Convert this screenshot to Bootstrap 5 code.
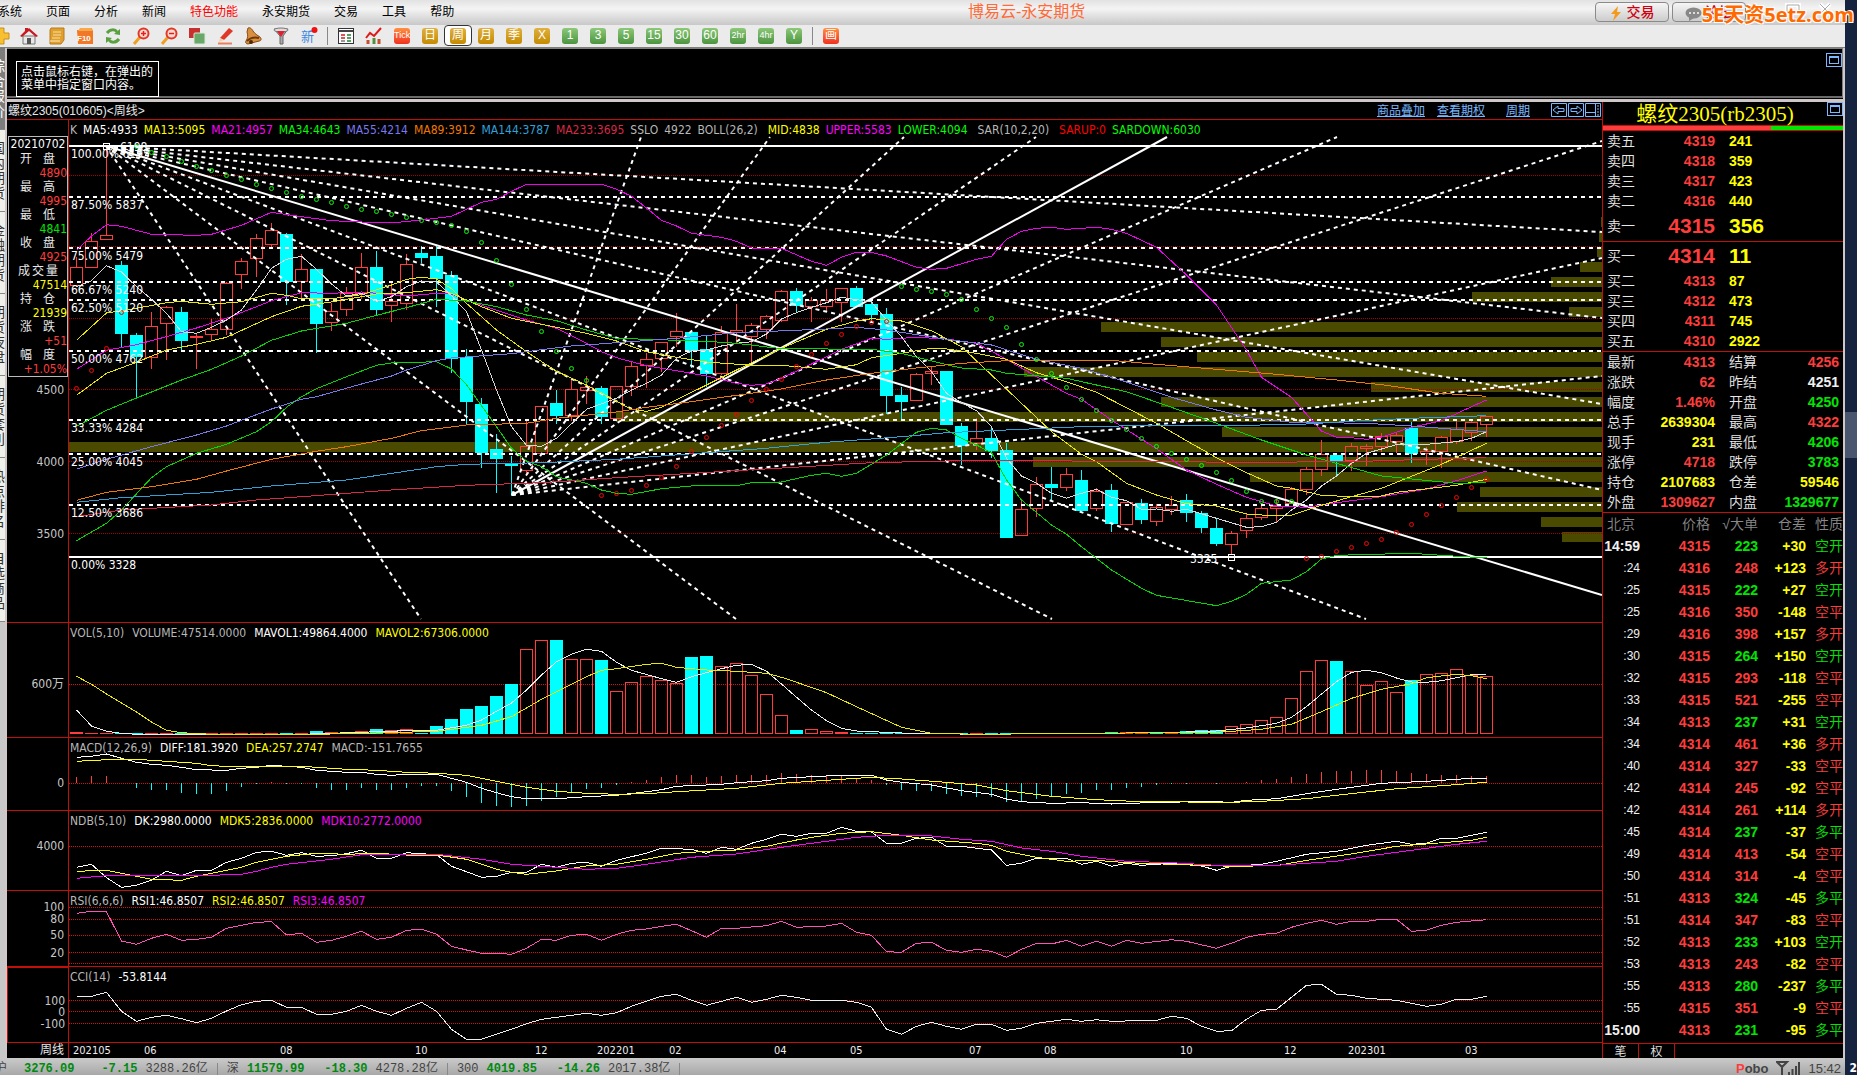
<!DOCTYPE html>
<html lang="zh-CN">
<head>
<meta charset="utf-8">
<meta name="viewport" content="width=device-width, initial-scale=1">
<title>博易云-永安期货</title>
<link href="https://cdn.jsdelivr.net/npm/bootstrap@5.3.0/dist/css/bootstrap.min.css" rel="stylesheet">
<style>
:root{--line:#c01008;--up:#ff3c3c;--down:#00e600;--yel:#ffff00;--sky:#7ab8ff}
body{background:#16233f;color:#e8e8e8;font:12px/14px "DejaVu Sans Condensed","Noto Sans CJK SC",sans-serif;overflow:hidden}
.app{min-height:100vh;margin-right:12px;background:#000}
.cjk{font-family:"Liberation Sans","Noto Sans CJK SC",sans-serif}
.menubar{height:25px;background:linear-gradient(#e2e2e2,#f4f4f4 35%,#c8c8c8);color:#000}
.menubar .nav{margin-left:-14px}
.menubar .nav-link{padding:5px 12px;color:#000;font-size:12px;line-height:15px}
.menubar .nav-link.hot{color:#f00}
.apptitle{left:968px;top:2px;color:#ff6a38;font-size:16px;line-height:20px}
.winbtns{gap:3px;padding:2px 6px 0 0}
.winbtn{height:20px;width:74px;border:1px solid #8a8a8a;border-radius:4px;background:linear-gradient(#f6f6f6,#ccc);color:#d00010;font:500 14px/16px "Noto Sans CJK SC",sans-serif;padding:0}
.watermark{right:-9px;top:3px;z-index:5;color:#ff6a00;font:bold 20px/24px "Open Sans","Noto Sans CJK SC",sans-serif;text-shadow:1px 1px 0 #fff,-1px 1px 0 #fff,1px -1px 0 #fff}
.toolbar{height:23px;background:#ebebeb;border-bottom:1px solid #7e8078;padding-bottom:1px;overflow:hidden}
.toolbar .tools{margin-left:-13px}
.tool{width:28px;height:21px;border:0;padding:0;background:none;line-height:0}
.tool.picked{background:#fff;border:1px solid #333;border-radius:4px}
.tool svg{width:18px;height:18px}
.per{display:inline-block;width:16px;height:16px;border-radius:3px;color:#fff;font:12px/15px "Liberation Sans","Noto Sans CJK SC",sans-serif;text-align:center;vertical-align:middle}
.per.gold{background:linear-gradient(#e0b040,#c48a00)}
.per.leaf{background:linear-gradient(#8cc878,#4c9440)}
.per.fire{background:linear-gradient(#ff9040,#f03020)}
.per.tiny{font-size:9px}
.tsep{width:1px;height:18px;background:#888;margin:0 4px}
.sidetabs{width:5px;background:#c8c8c8;overflow:hidden}
.sidetab{height:82px;width:5px;background:#f0f0ea;border:0;border-bottom:1px solid #888;padding:10px 0 0;color:#333;font:14px/15px "Noto Sans CJK SC",sans-serif;overflow:hidden;display:flex;justify-content:flex-end}
.sidetab span{display:block;width:14px;flex:none}
.sidetab.on{background:#7d7d7d;color:#fff}
.shell{border-left:2px solid #d0c8c8;border-right:2px solid #d0c8c8}
.topwin{height:50px;border:1px solid #808080;border-left:0;border-bottom:2px solid #6a6a6a}
.hint{margin:12px 0 0 9px;border:1px solid #fff;width:143px;height:36px;padding:4px 4px;font-size:12px;line-height:13px;color:#fff}
.divider{height:3px;background:#d0c8c8;margin:1px -2px 0}
.maxbox{width:16px;height:14px;border:1px solid var(--sky);background:none;padding:2px;display:block}
.maxbox i{display:block;height:8px;border:1px solid var(--sky);border-top-width:2px}
.cname{height:18px;font-size:12px;line-height:18px;padding-left:1px;border-bottom:1px solid var(--line)}
.cname a{color:var(--sky);font-size:12px}
.cname .wide{margin-left:21px}
.pane{border-bottom:1px solid var(--line)}
.pane-k{min-height:502px}
.pane-vol{height:115px}.pane-macd{height:73px}.pane-ndb{height:80px}.pane-osc{height:76px}
.scale{width:62px;border-right:1px solid var(--line)}
.scale.picked{border:2px solid var(--line);border-width:1px 1px 0 1px}
.plot{overflow:hidden}
.legend{top:3px;left:1px;gap:8px;white-space:nowrap;color:#b8b8b8;z-index:1}
.legend.tightgap{gap:6px}
svg.canvas{position:absolute;inset:0;width:100%;height:100%}
svg text{font-family:"DejaVu Sans Condensed","Noto Sans CJK SC",sans-serif;font-size:12px}
svg polyline{shape-rendering:crispEdges}
.databox{margin:16px 0 0 1px;width:60px;border:1px solid #bbb;background:#000}
.databox dt,.databox dd{height:14px;line-height:14px;margin:0;font-weight:400}
.databox dt{display:flex;justify-content:space-between;padding:0 12px 0 11px}
.databox dt.tight{padding:0 9px}
.databox dd{text-align:right}
.databox time{display:block;height:15px;line-height:15px;font-size:12px;text-align:center;color:#fff}
.dates{height:15px}
.side{width:241px;border-left:1px solid var(--line)}
.side h1{margin:0;height:23px;color:var(--yel);font:21px/25px "Liberation Serif","Noto Sans CJK SC",serif;text-align:center;padding-right:16px}
.balance{height:6px;border:solid var(--line);border-width:1px 0}
.balance .ask{background:#ff3c3c}
.balance .bid{background:#00e600}
.u{color:var(--up)}.d{color:var(--down)}.y{color:var(--yel)}.w{color:#f0f0f0}
.quote{width:100%;table-layout:fixed;border-collapse:collapse;font:bold 14px/20px "Liberation Sans","Noto Sans CJK SC",sans-serif}
.quote td,.quote th{padding:0;height:20px;white-space:nowrap}
.quote th{font-weight:350;padding-left:4px;color:#e8e8e8}
.quote .mid{padding-left:14px}
.quote .end{padding-right:4px}
.quote tr.best td{font-size:21px}
.quote tr.best td,.quote tr.best th{height:30px}
.quote td.r{text-align:right}
.quote .cut td,.quote .cut th{border-bottom:1px solid var(--line)}
.ticks{height:528px}
.ticks th{color:#8a8a8a}
.ticks td,.ticks th{height:22px}
.ticks td:last-child{font-weight:350}
.ticks .sec{font-size:12px;font-weight:400}
.tabs2{height:15px;border-top:1px solid var(--line)}
.tabs2 button{background:none;color:#ddd;border:0;border-right:1px solid var(--line);width:36px;padding:0;font:12px/14px "Noto Sans CJK SC",sans-serif}
.status{height:17px;background:linear-gradient(#cacaca,#a8a8a8);color:#444;font:12px/22px "Liberation Mono","Noto Sans CJK SC",monospace;overflow:hidden;white-space:nowrap}
.status b{color:#008a10}
.status .first{margin-left:-5px}
.status .gap1{margin-left:17px}
.status .chg{width:55px;text-align:right;margin:0 8px}
.status i{width:1px;height:13px;background:#888;margin:5px 9px 0}
.status .sys{font-size:13px}
.deskthumb{right:0;top:412px;width:12px;height:46px;background:#4a566e}
.deskclock{right:0;top:1062px;font-size:12px;line-height:13px;color:#fff;font-weight:bold}
</style>
<script src="https://cdn.jsdelivr.net/npm/bootstrap@5.3.0/dist/js/bootstrap.bundle.min.js"></script>
</head>
<body>
<div class="app d-flex flex-column position-relative">
  <header class="menubar d-flex justify-content-between position-relative cjk">
    <nav class="nav flex-nowrap">
      <a class="nav-link" href="#">系统</a><a class="nav-link" href="#">页面</a><a class="nav-link" href="#">分析</a><a class="nav-link" href="#">新闻</a><a class="nav-link hot" href="#">特色功能</a><a class="nav-link" href="#">永安期货</a><a class="nav-link" href="#">交易</a><a class="nav-link" href="#">工具</a><a class="nav-link" href="#">帮助</a>
    </nav>
    <div class="apptitle position-absolute">博易云-永安期货</div>
    <div class="winbtns d-flex">
      <button class="winbtn"><svg width="14" height="15" viewBox="0 0 14 15"><path d="M9 0L2 8h4L4 15 12 6H8z" fill="#f49a1a"/></svg> 交易</button>
      <button class="winbtn me-2"><svg width="17" height="14" viewBox="0 0 17 14"><ellipse cx="8.500" cy="6" rx="8" ry="5.500" fill="#888"/><path d="M4 9v5l5-3z" fill="#888"/><path d="M4 6h2M8 6h2M12 6h2" stroke="#ddd" stroke-width="2"/></svg> 论坛</button>
      <svg width="82" height="16" viewBox="0 0 82 16" fill="none" stroke="#fff" stroke-width="4"><path d="M2 11h12M30 3h12v8H30zM63 2l10 10M73 2L63 12"/><path d="M2 11h12M30 3h12v8H30zM63 2l10 10M73 2L63 12" stroke="#aaa" stroke-width="1"/></svg>
    </div>
  </header>
  <div class="watermark position-absolute">5E天资5etz.com</div>

  <div class="toolbar">
    <div class="tools d-flex align-items-center" id="tools"></div>
  </div>

  <div class="d-flex flex-grow-1">
    <div class="sidetabs d-flex flex-column flex-shrink-0">
      <button class="sidetab on"><span>综合报价</span></button><button class="sidetab"><span>国内期货</span></button><button class="sidetab"><span>金融期货</span></button><button class="sidetab"><span>期货夜盘</span></button><button class="sidetab"><span>期货套利</span></button><button class="sidetab"><span>热点排名</span></button><button class="sidetab"><span>自选商品</span></button>
    </div>
    <div class="shell flex-grow-1 d-flex flex-column">
      <div class="topwin d-flex justify-content-between align-items-start cjk">
        <div class="hint">点击鼠标右键，在弹出的<br>菜单中指定窗口内容。</div>
        <button class="maxbox mt-1" aria-label="最大化"><i></i></button>
      </div>
      <div class="divider"></div>
      <div class="d-flex flex-grow-1">
        <main class="flex-grow-1 d-flex flex-column">
          <div class="cname cjk d-flex">
            <span class="me-auto">螺纹2305(010605)&lt;周线&gt;</span>
            <a href="#">商品叠加</a><a href="#" class="ms-2 ps-1">查看期权</a><a href="#" class="wide">周期</a>
            <svg class="wide mt-0" width="51" height="15" viewBox="0 -1 51 15" fill="none" stroke="#7ab8ff"><path d="M.5.5h15v13H.5zM17.500.5h15v13h-15zM34.500.5h15v13h-15zM2 7l5-4v2.500h6v3H7V11zM31 7l-5-4v2.500h-6v3h6V11zM34 9.500h10M44.500 0v14"/><path d="M47 2v11" stroke-dasharray="2 1"/></svg>
          </div>
          <section class="pane pane-k d-flex flex-grow-1">
            <div class="scale position-relative flex-shrink-0">
              <dl class="databox mb-0" id="databox"></dl>
              <svg class="canvas" id="kScale"></svg>
            </div>
            <div class="plot position-relative flex-grow-1">
              <div class="legend tightgap position-absolute d-flex" id="kLegend"></div>
              <svg class="canvas" id="k"></svg>
            </div>
          </section>
          <section class="pane pane-vol d-flex"><div class="scale position-relative flex-shrink-0"><svg class="canvas" id="volScale"></svg></div>
            <div class="plot position-relative flex-grow-1"><div class="legend position-absolute d-flex" id="volLegend"></div><svg class="canvas" id="vol"></svg></div></section>
          <section class="pane pane-macd d-flex"><div class="scale position-relative flex-shrink-0"><svg class="canvas" id="macdScale"></svg></div>
            <div class="plot position-relative flex-grow-1"><div class="legend position-absolute d-flex" id="macdLegend"></div><svg class="canvas" id="macd"></svg></div></section>
          <section class="pane pane-ndb d-flex"><div class="scale position-relative flex-shrink-0"><svg class="canvas" id="ndbScale"></svg></div>
            <div class="plot position-relative flex-grow-1"><div class="legend position-absolute d-flex" id="ndbLegend"></div><svg class="canvas" id="ndb"></svg></div></section>
          <section class="pane pane-osc d-flex"><div class="scale position-relative flex-shrink-0"><svg class="canvas" id="rsiScale"></svg></div>
            <div class="plot position-relative flex-grow-1"><div class="legend position-absolute d-flex" id="rsiLegend"></div><svg class="canvas" id="rsi"></svg></div></section>
          <section class="pane pane-osc d-flex"><div class="scale picked position-relative flex-shrink-0"><svg class="canvas" id="cciScale"></svg></div>
            <div class="plot position-relative flex-grow-1"><div class="legend position-absolute d-flex" id="cciLegend"></div><svg class="canvas" id="cci"></svg></div></section>
          <section class="dates d-flex"><div class="scale cjk text-end pe-1">周线</div><div class="plot position-relative flex-grow-1"><svg class="canvas" id="dates"></svg></div></section>
        </main>

        <aside class="side flex-shrink-0 d-flex flex-column">
          <div class="position-relative"><h1>螺纹2305(rb2305)</h1><button class="maxbox position-absolute top-0 end-0" aria-label="最大化"><i></i></button></div>
          <div class="balance d-flex flex-shrink-0"><div class="ask" style="width:70%"></div><div class="bid flex-grow-1"></div></div>
          <table class="quote" id="quote"><colgroup><col style="width:42px"><col style="width:70px"><col style="width:50px"><col></colgroup></table>
          <table class="quote ticks" id="ticks"><colgroup><col style="width:37px"><col style="width:70px"><col style="width:48px"><col style="width:48px"><col></colgroup></table>
          <div class="tabs2 d-flex mt-auto"><button>笔</button><button>权</button></div>
        </aside>
      </div>
    </div>
  </div>

  <footer class="status d-flex">
    <span class="first">沪</span><b class="gap1">3276.09</b><b class="chg">-7.15</b><span>3288.26亿</span><i></i>
    <span>深</span><b class="ms-2">11579.99</b><b class="chg">-18.30</b><span>4278.28亿</span><i></i>
    <span>300</span><b class="ms-2">4019.85</b><b class="chg">-14.26</b><span>2017.38亿</span><i></i>
    <span class="sys ms-auto cjk fw-bold"><span class="u">P</span>obo</span>
    <svg class="mx-2" width="24" height="17" viewBox="0 0 24 17" fill="none" stroke="#444" stroke-width="2"><path d="M1 4h10L6 9zM6 9v8M13 17v-3M16.500 17v-6M20 17V8M23 17V4"/></svg>
    <span class="sys cjk me-1">15:42</span>
  </footer>
</div>
<div class="deskthumb position-absolute"></div>
<div class="deskclock position-absolute">2</div>

<script>
const $ = id => document.getElementById(id);
const UP='#ff3c3c', DN='#00ffff';

/* ---------- toolbar ---------- */
const icons = {
 add:'<path d="M6 1h6v5h5v6h-5v5H6v-5H1V6h5z" fill="#f8c030" stroke="#c89018"/>',
 home:'<path d="M3 9h12v8H3z" fill="#e8e8e8" stroke="#777"/><path d="M7 11h4v6H7z" fill="#555"/><path d="M0 9L5 4V1h3v1l1-1 9 8-2 1-7-6-7 6z" fill="#c81820"/>',
 book:'<path d="M3 1h13v12l-3 4H2V3z" fill="#e0a030" stroke="#b87c18"/><path d="M5 5h8M5 8h8M4 11h8" stroke="#f8e0a0"/><path d="M2 14h10" stroke="#fff0c0"/>',
 f10:'<path d="M1 3h16v14H2z" fill="#f07828"/><path d="M4 1h12l1 3H2z" fill="#f8a848"/><text x="1" y="14" style="font:bold 8px Liberation Sans" fill="#fff">F10</text>',
 refresh:'<path d="M3 6c3-4 8-4 10-1M15 12c-3 4-8 4-10 1" fill="none" stroke="#58a040" stroke-width="3"/><path d="M16 2v6l-6-1zM2 16v-6l6 1z" fill="#58a040"/>',
 zin:'<path d="M2 17l6-7" stroke="#f0a020" stroke-width="3"/><circle cx="11.500" cy="6.500" r="5" fill="#ffd8d0" stroke="#e03828" stroke-width="2"/><path d="M9 6.500h5M11.500 4v5" stroke="#e02020" stroke-width="1.500"/>',
 zout:'<path d="M2 17l6-7" stroke="#f0a020" stroke-width="3"/><circle cx="11.500" cy="6.500" r="5" fill="#ffd8d0" stroke="#e03828" stroke-width="2"/><path d="M9 6.500h5" stroke="#e02020" stroke-width="1.500"/>',
 copy:'<rect x="1" y="1" width="11" height="10" fill="#c83030"/><rect x="6" y="6" width="11" height="11" rx="1" fill="#68a868" stroke="#d8e8d8"/>',
 pen:'<path d="M4 11L13 1l4 3L8 13z" fill="#e03828"/><path d="M4 11l4 2-5 2z" fill="#f8d0a0"/><path d="M2 16.500h14" stroke="#e88060" stroke-width="2"/>',
 bell:'<path d="M4 1c2-1 4 1 5 3 2 3 4 4 7 6 2 2 1 4-1 4L4 17c-2 0-3-2-2-3 2-3 2-6 1-9z" fill="#d89040" stroke="#8a4810"/><path d="M3 14c3-3 8-4 12-3" stroke="#703808" stroke-width="2" fill="none"/><circle cx="7" cy="15" r="2" fill="#502808"/>',
 funnel:'<path d="M2 2h14l-5 7v8H8V9z" fill="#aaa" stroke="#666"/><ellipse cx="9" cy="3" rx="7" ry="2" fill="#ddd" stroke="#777"/><path d="M5 4h8l-4 6z" fill="#e02030"/>',
 fresh:'<text x="1" y="14" style="font-size:13px" fill="#3888e0">新</text><circle cx="14.500" cy="3" r="3" fill="#f01010"/>',
 table:'<rect x="1.500" y="1.500" width="15" height="15" fill="#fff" stroke="#333"/><path d="M2 4h14" stroke="#444" stroke-width="2"/><path d="M4 8h4M4 11h4" stroke="#d02020" stroke-width="1.500"/><path d="M10 8h4M10 11h4M10 14h4" stroke="#208030" stroke-width="1.500"/><path d="M4 14h4" stroke="#333"/>',
 chart:'<path d="M3 17v-4M14 17v-5" stroke="#c05030" stroke-width="3"/><path d="M9 17v-6" stroke="#509040" stroke-width="3"/><path d="M1 11l4-5 4 3 7-8" stroke="#e01818" stroke-width="2" fill="none"/>'
};
const names={add:'添加',home:'首页',book:'资讯',f10:'资料',refresh:'刷新',zin:'放大',zout:'缩小',copy:'叠加',pen:'画线',bell:'预警',funnel:'筛选',fresh:'新增',table:'报价',chart:'分时'};
let tb='';
for(const n of ['add','home','book','f10','refresh','zin','zout','copy','pen','bell','funnel','fresh','|','table','chart'])
  tb += n==='|' ? '<span class="tsep"></span>' : `<button class="tool" aria-label="${names[n]}"><svg viewBox="0 0 18 18">${icons[n]}</svg></button>`;
for(const p of ['fire tiny:Tick','gold:日','gold:周','gold:月','gold:季','gold:X','leaf:1','leaf:3','leaf:5','leaf:15','leaf:30','leaf:60','leaf tiny:2hr','leaf tiny:4hr','leaf:Y','|','fire:画']){
  if(p==='|'){tb+='<span class="tsep"></span>';continue}
  const [c,t]=p.split(':'); tb+=`<button class="tool ${t==='周'?'picked':''}"><span class="per ${c}">${t}</span></button>`;
}
$('tools').innerHTML=tb;

/* ---------- legends and side texts ---------- */
const legend=(id,items)=>$(id).innerHTML=items.map(([t,c,m])=>`<span class="${m?'ms-1':''}" style="color:${c}">${t}</span>`).join('');
const G='#b8b8b8',W='#fff',Y='#ff0',M='#f0f';
legend('kLegend',[['K',G],['MA5:4933',W],['MA13:5095',Y],['MA21:4957',M],['MA34:4643','#0f0'],['MA55:4214','#7878f0'],['MA89:3912','#f07800'],['MA144:3787','#30a0d8'],['MA233:3695','#d82848'],['SSLO',G],['4922',G],['BOLL(26,2)',G],['MID:4838',Y,1],['UPPER:5583',M],['LOWER:4094','#0f0'],['SAR(10,2,20)',G,1],['SARUP:0','#f00',1],['SARDOWN:6030','#0f0']]);
legend('volLegend',[['VOL(5,10)',G],['VOLUME:47514.0000',G],['MAVOL1:49864.4000',W],['MAVOL2:67306.0000',Y]]);
legend('macdLegend',[['MACD(12,26,9)',G],['DIFF:181.3920',W],['DEA:257.2747',Y],['MACD:-151.7655',G]]);
legend('ndbLegend',[['NDB(5,10)',G],['DK:2980.0000',W],['MDK5:2836.0000',Y],['MDK10:2772.0000',M]]);
legend('rsiLegend',[['RSI(6,6,6)',G],['RSI1:46.8507',W],['RSI2:46.8507',Y],['RSI3:46.8507',M]]);
legend('cciLegend',[['CCI(14)',G],['-53.8144',W]]);
$('databox').innerHTML='<time>20210702</time>'+[['开盘','4890','u'],['最高','4995','u'],['最低','4841','d'],['收盘','4925','u'],['成交量','47514','y'],['持仓','21939','y'],['涨跌','+51','u'],['幅度','+1.05%','u']]
 .map(([a,b,c])=>`<dt class="cjk ${a.length>2?'tight':''}">${[...a].map(s=>`<span>${s}</span>`).join('')}</dt><dd class="${c}">${b}</dd>`).join('');

/* ---------- drawing helpers: values are thirds of a pixel ---------- */
const X=i=>7.5+15*i;
const pairs=s=>s.trim().split(/\s+/).map(p=>p.split(',').map(Number));
const path=(s,f,c,extra='')=>`<polyline points="${pairs(s).map(([i,v])=>X(i)+','+f(v).toFixed(1)).join(' ')}" fill="none" stroke="${c}" ${extra}/>`;
const grid=(y,c='#d81010')=>`<line x1="0" x2="100%" y1="${Math.floor(y)+.5}" y2="${Math.floor(y)+.5}" stroke="${c}" stroke-dasharray="1 1"/>`;
const scale=(id,list)=>$(id).innerHTML=list.map(([y,t])=>`<text x="57" y="${Math.round(y)+4}" text-anchor="end" fill="#c8c8c8">${t}</text>`).join('');

/* ---------- K pane ---------- */
{
const f=v=>v/3+10; let s='';
[[260,1601],[306,1599],[351,1597],[396,1580],[441,1551],[486,1472],[531,1569],[576,1101],[621,1161],[666,1197],[711,1024],[756,1371],[801,1161],[846,616],[891,1222],[936,69],[981,1033],[1026,1250],[1071,1480],[1116,1457],[1161,1541],[1206,1562]]
 .forEach(([y,x])=>s+=`<rect x="${x-69}" y="${f(y).toFixed(0)}" width="100%" height="10" fill="#4a4a00"/>`);
[136,349,565,778,995,1210].forEach(v=>s+=grid(f(v),'#a80000'));
const C=`u 412 464 380 464;u 334 412 309 412;u 316 328 48 330;d 405 612 393 655;d 615 682 609 804;u 589 682 546 717;u 532 580 528 690;d 546 633 531 662;u 618 621 612 717;u 597 612 567 634;u 460 596 455 615;u 394 433 384 477;u 325 385 312 441;u 301 341 279 350;d 312 456 310 525;u 418 454 373 507;d 417 582 417 669;u 544 577 519 603;u 490 538 471 558;u 412 488 369 507;d 411 540 363 556;u 514 524 456 576;u 403 520 372 540;d 369 384 348 399;d 378 447 345 531;d 435 687 423 729;d 681 816 657 886;d 822 969 804 1014;d 957 987 912 1089;d 1002 1008 978 1098;u 949 1021 873 1038;u 829 970 829 970;d 819 858 780 882;u 778 856 750 874;u 772 780 738 822;d 774 861 768 882;u 769 865 769 865;u 709 769 694 798;u 688 706 669 774;u 637 685 637 726;u 604 619 549 651;d 606 663 606 714;d 657 732 615 771;u 607 730 588 735;u 601 607 522 640;u 586 619 580 706;u 559 598 555 627;u 484 571 480 575;d 483 528 474 550;u 511 527 501 576;u 511 529 477 543;u 475 517 475 576;d 474 531 468 531;d 522 555 505 573;d 552 798 534 852;d 795 816 771 873;u 733 811 729 811;u 724 728 711 765;d 723 885 723 885;d 888 948 879 1005;u 925 940 864 960;d 924 963 888 984;d 960 1224 939 1224;u 1138 1216 1110 1216;u 1063 1135 1041 1161;d 1062 1074 1011 1110;u 1033 1072 1014 1084;d 1050 1143 1020 1143;u 1084 1135 1074 1143;d 1080 1182 1062 1206;u 1117 1183 1117 1183;d 1119 1170 1107 1182;u 1132 1174 1122 1188;u 1126 1138 1098 1155;d 1110 1149 1092 1176;d 1149 1194 1143 1209;d 1194 1242 1168 1249;u 1210 1243 1204 1275;u 1165 1201 1150 1224;u 1135 1162 1120 1170;u 1129 1134 1108 1176;u 1078 1120 1072 1120;u 1018 1078 1010 1095;u 973 1018 930 1038;d 975 993 970 1040;u 949 991 938 1022;u 949 953 942 1008;u 919 949 910 966;u 916 932 906 968;d 894 972 876 998;u 964 970 950 1005;u 922 964 918 1014;u 898 932 873 942;u 877 907 874 933;u 859 883 859 920`;
s+='<g shape-rendering="crispEdges">';
C.split(';').forEach((c,i)=>{const p=c.split(' '),[a,b,h,l]=p.slice(1).map(v=>Math.round(f(+v))),x=X(i),k=p[0]==='u'?UP:DN;
 s+=`<path d="M${x} ${h}V${a}M${x} ${b}V${l}" stroke="${k}"/>`;
 s+=p[0]==='u'?`<rect x="${x-6}" y="${a+.5}" width="12" height="${Math.max(1,b-a)}" fill="none" stroke="${k}"/>`:`<rect x="${x-6.5}" y="${a}" width="13" height="${Math.max(2,b-a)}" fill="${k}"/>`});
s+='</g><g stroke="#fff" stroke-width="2">';
[146,557].forEach(y=>s+=`<path d="M0 ${y-120}H4000"/>`);
[197,248,282,300,351,420,454,505].forEach(y=>s+=`<path d="M0 ${y-120}H4000" stroke-dasharray="4 4"/>`);
const ray=(x0,y0,x1,y1,solid)=>s+=`<path d="M${x0-69} ${y0-120}L${x1-69} ${y1-120}" ${solid?'':'stroke-dasharray="4 4"'}/>`;
[[1602,232],[1602,318],[1602,404],[1602,490],[1366,619],[1052,619],[736,619],[421,619]].forEach(p=>ray(106,146,...p));
ray(106,146,1602,595,1);
[[641,137],[770,137],[904,137],[1036,137],[1337,137],[1602,141],[1602,258],[1602,376]].forEach(p=>ray(512,495,...p));
ray(512,495,1167,137,1);
s+='</g>';
s+=path('0,361 1,318 2,284 3,289 5,313 8,316 9,313 11,286 13,247 15,260 17,272 19,276 21,279 23,270 25,259 27,217 28,208 29,184 30,163 35,163 36,178 37,199 38,234 39,271 40,288 41,310 43,322 44,334 45,354 46,357 47,355 49,394 50,406 51,382 52,367 53,367 54,378 56,412 57,418 58,415 60,388 61,379 62,328 63,304 64,295 65,292 66,298 68,292 69,298 70,310 72,352 74,435 76,525 78,660 79,742 81,802 83,903 84,922 85,923 86,928 87,922 89,892 91,872 93,830 94,810',f,'#f000f0');
s+=path('0,718 2,661 4,644 6,620 8,594 10,565 12,530 13,512 15,488 17,490 19,486 22,498 24,490 25,492 26,510 28,541 30,570 32,595 34,640 35,665 36,683 38,707 40,722 42,738 44,760 45,766 46,762 47,745 49,702 51,658 53,625 54,628 56,622 58,627 60,640 62,688 64,740 66,790 67,808 69,870 72,956 74,1020 76,1063 78,1102 80,1128 82,1132 84,1118 87,1100 90,1077 92,1052 94,1023',f,'#f000f0');
s+=path('0,631 2,549 4,535 6,518 7,514 9,523 11,515 13,490 14,496 15,506 17,506 19,494 21,465 22,448 23,442 24,447 25,476 26,520 28,600 30,665 32,724 34,765 35,790 37,838 38,844 39,832 42,765 44,720 47,655 50,598 52,573 53,566 55,573 57,602 59,650 61,735 63,820 65,905 67,973 68,995 70,1060 72,1095 74,1121 76,1128 78,1152 80,1158 81,1156 83,1126 85,1100 87,1075 91,1003 94,940',f,'#e8e800');
s+=path('0,796 2,730 4,697 6,660 8,643 10,622 13,560 15,529 17,516 19,500 20,492 22,488 24,479 25,490 27,530 29,565 32,592 34,610 36,633 38,665 40,682 42,696 45,706 47,706 50,718 52,704 53,683 55,670 57,655 58,657 60,670 62,688 64,728 66,755 68,787 70,833 72,880 74,932 76,983 78,1028 80,1068 81,1075 83,1096 85,1100 87,1098 88,1087 92,1066 94,1048',f,'#e8e800');
s+=path('0,470 1,452 2,407 3,426 4,470 5,508 6,550 7,605 8,610 9,592 10,570 11,540 12,480 13,415 14,388 15,379 16,418 17,462 18,498 19,490 20,514 21,500 22,470 23,453 24,456 25,497 26,545 27,660 28,780 29,890 30,946 31,949 32,925 34,838 36,805 37,780 38,760 39,735 40,685 41,663 42,660 43,648 44,640 45,635 46,612 47,567 48,548 49,532 50,518 51,502 53,516 54,570 55,620 56,680 57,725 58,790 59,818 60,842 61,890 62,985 63,1038 64,1060 65,1090 66,1105 67,1090 68,1078 69,1102 70,1112 71,1138 72,1137 73,1144 74,1138 76,1165 78,1192 79,1190 80,1177 81,1140 82,1110 83,1068 84,1038 85,1000 86,970 88,944 90,943 92,935 93,925 94,905',f,'#d8d8d8');
s+=path('0,889 2,841 4,804 7,750 9,718 11,678 13,631 15,603 18,580 20,556 22,533 24,508 26,513 28,530 30,555 32,572 34,600 36,625 42,634 44,640 47,656 53,658 55,670 58,704 59,714 61,720 62,730 66,745 70,785 73,832 76,880 79,930 82,975 84,1000 87,1038 89,1047 92,1060 94,1058',f,'#00d800');
s+=path('0,1232 2,1180 3,1140 5,1043 6,1010 8,970 10,943 12,905 13,875 14,832 15,800 16,776 18,740 20,706 21,699 24,695 25,717 26,764 28,890 29,955 30,993 31,1010 32,1040 34,1060 35,1080 36,1090 37,1093 39,1076 41,1068 44,1067 45,1058 47,1056 49,1036 50,1030 51,1039 52,1030 54,975 56,907 57,895 58,900 59,925 60,945 61,968 62,1050 63,1110 65,1185 66,1213 67,1250 69,1320 71,1375 72,1396 76,1427 77,1414 78,1393 79,1360 81,1350 82,1325 83,1287 84,1276 89,1270 91,1276 94,1284',f,'#00d800');
s+=path('0,1018 2,988 5,950 8,915 10,888 13,837 15,808 16,800 19,762 21,738 22,720 24,692 25,684 29,671 31,659 33,648 36,638 40,625 44,608 50,597 52,592 54,600 58,628 61,645 64,688 67,715 70,756 73,802 76,840 78,862 81,877 86,880 89,888 94,905',f,'#7878e8');
s+=path('0,1111 2,1087 5,1070 8,1048 10,1023 13,988 16,964 18,950 21,925 23,902 26,885 30,880 32,865 36,846 38,832 41,815 44,796 47,777 50,750 53,730 56,714 59,700 62,692 69,691 72,703 76,718 80,733 84,750 87,764 91,790 94,799',f,'#f07800');
s+=path('0,1117 3,1103 9,1087 13,1068 18,1050 24,1010 26,1003 31,998 36,988 42,968 46,955 50,937 55,920 58,908 62,900 67,890 72,886 78,886 82,882 86,871 90,863 94,857',f,'#30a0d8');
s+=path('0,1160 3,1140 9,1125 12,1110 15,1100 21,1080 26,1066 31,1058 36,1043 44,1022 53,998 60,991 69,994 78,997 85,995 90,988 94,983',f,'#d82848');
const dots=(t,c)=>pairs(t).forEach(([i,v])=>s+=`<circle cx="${X(i)}" cy="${Math.floor(f(v))+.5}" r="2" fill="none" stroke="${c}"/>`);
dots('4,50 5,66 6,80 7,95 8,109 9,122 10,136 11,148 12,163 13,175 14,187 15,199 16,208 17,217 18,229 19,238 20,244 21,253 22,262 23,271 24,277 25,286 26,304 27,337 28,391 29,463 30,538 31,604 32,664 33,715 34,751 55,469 56,478 57,484 58,493 59,508 60,538 61,565 62,592 63,643 64,688 65,730 66,772 67,808 68,841 69,872 70,898 71,925 72,949 73,970 74,988 75,1006 76,1027 77,1051 78,1084 79,1114 80,1114 81,1114','#00ff00');
dots('0,775 1,721 2,655 3,547 35,1096 36,1090 37,1081 38,1066 39,1042 40,1009 41,964 42,922 43,886 44,853 45,811 46,778 47,748 48,710 49,673 50,640 51,613 52,589 53,577 54,574 82,1285 83,1280 84,1264 85,1252 86,1240 87,1228 88,1207 89,1183 90,1153 91,1126 92,1102 93,1072 94,1048','#ff0000');
[['100.00% 6195',146],['87.50% 5837',197],['75.00% 5479',248],['66.67% 5240',282],['62.50% 5120',300],['50.00% 4762',351],['33.33% 4284',420],['25.00% 4045',454],['12.50% 3686',505],['0.00% 3328',557]]
 .forEach(([t,y])=>s+=`<text x="2" y="${y-120+12}" fill="#fff">${t}</text>`);
s+='<text x="51" y="31" fill="#fff">6198</text><text x="1121" y="443" fill="#fff">3325</text>';
[[37.5,26.5,'h12'],[1162.5,437.5,'h-12']].forEach(([x,y,d])=>s+=`<rect x="${x-3}" y="${y-3}" width="6" height="6" fill="none" stroke="#fff"/><path d="M${x} ${y}${d}" stroke="#fff"/>`);
$('k').innerHTML=s;
scale('kScale',[[270,'4500'],[342,'4000'],[414,'3500']]);
}

/* ---------- VOL ---------- */
{
const f=v=>v/3-13;
let B='u366 u369 u369 d369 d369 u369 u369 d369 u369 u369 u369 u369 u369 u369 d369 u369 d363 u366 u367 u363 d357 u360 u357 d369 d348 d327 d297 d288 d258 d222 u118 u91 d90 u148 u148 d150 u244 u217 u199 u211 u220 d141 d138 u169 u160 u196 u253 u316 d360 u358 u364 u367 d369 d369 d369 d369 u369 u369 d369 d369 u369 d369 d369 u369 u369 d369 d369 u369 u369 d366 u367 u369 d369 u369 d363 d360 d360 u349 u343 u331 u322 u265 u184 u151 d153 u184 u226 u214 u247 d210 u193 u190 u178 u196 u199'.split(' ');
let s=grid(f(223))+'<g shape-rendering="crispEdges">';
B.forEach((b,i)=>{const y=Math.round(f(+b.slice(1))),x=X(i),h=111-y;
 s+=b[0]==='u'&&h>2?`<rect x="${x-6}" y="${y+.5}" width="12" height="${h-1}" fill="none" stroke="${UP}"/>`:`<rect x="${x-6.5}" y="${y}" width="13" height="${Math.max(1,h)}" fill="${b[0]==='u'?UP:DN}"/>`});
s+='</g>'+path('0,300 1,348 2,364 3,370 4,373 15,373 17,370 22,362 24,361 26,346 27,330 28,304 29,279 30,240 31,195 32,155 33,133 34,118 35,124 36,157 37,181 39,206 40,217 41,200 43,176 44,166 45,163 46,184 47,222 48,262 49,300 50,332 51,355 52,363 55,369 60,373 70,369 74,366 76,363 78,354 80,340 81,322 82,290 83,252 84,215 85,187 86,181 87,188 88,204 89,216 90,217 91,212 92,203 93,194 94,193',f,'#eee');
s+=path('0,199 1,223 2,252 4,306 5,336 6,361 7,368 9,373 16,373 20,369 24,364 27,346 29,320 31,268 33,223 34,200 35,181 36,176 38,163 39,160 40,172 42,180 44,184 46,190 47,202 48,217 50,248 52,290 55,352 57,370 60,373 70,369 76,367 79,358 81,343 83,305 85,265 87,238 89,221 90,203 92,193 93,197 94,206',f,'#e8e800');
$('vol').innerHTML=s; scale('volScale',[[f(223),'600万']]);
}

/* ---------- MACD ---------- */
{
const f=v=>v/3-128, H='500 497 497 520 534 540 540 549 552 552 543 531 522 516 521 522 534 540 540 534 540 540 534 528 528 543 561 579 588 591 588 573 561 546 537 534 525 516 510 501 495 495 501 497 494 495 494 489 492 495 498 498 504 510 525 540 543 543 552 558 561 561 576 573 567 558 552 549 540 540 534 531 525 522 521 519 522 519 516 510 507 501 492 486 483 483 480 480 483 489 492 495 495 498 498'.split(' ');
let s=grid(f(520))+'<g shape-rendering="crispEdges">';
H.forEach((v,i)=>s+=`<path d="M${X(i)} ${f(520).toFixed(0)}V${f(+v).toFixed(0)}" stroke="${v<520?UP:DN}"/>`);
s+='</g>'+path('0,442 1,439 2,432 3,445 4,457 5,463 6,466 7,472 8,479 10,481 11,475 12,472 13,466 15,472 16,481 18,487 19,487 20,493 21,496 22,493 24,493 25,505 26,517 27,535 28,548 29,560 30,566 32,566 34,560 36,556 38,545 39,539 40,529 43,523 44,518 46,512 47,505 49,500 51,496 53,496 54,510 55,517 57,525 59,542 61,553 62,567 63,575 65,580 67,578 69,582 70,580 73,577 75,574 77,577 78,571 80,566 82,551 85,532 87,520 90,514 93,505 94,505',f,'#fff');
s+=path('0,454 2,449 4,448 6,454 8,460 9,467 10,469 15,469 18,478 20,481 22,487 24,490 26,496 28,514 30,532 32,544 34,550 36,553 38,551 40,545 44,535 47,520 50,511 53,502 55,507 58,517 60,525 62,542 65,559 68,569 71,575 77,577 79,574 82,566 84,556 88,536 91,527 94,517',f,'#ff0');
$('macd').innerHTML=s; scale('macdScale',[[f(520),'0']]);
}

/* ---------- NDB ---------- */
{
const f=v=>v/3-201;
$('ndb').innerHTML=grid(f(709))
+path('0,772 1,763 2,803 3,832 4,826 5,811 6,784 7,797 8,781 9,781 10,757 11,745 12,727 13,724 14,736 15,728 16,739 17,737 18,731 19,721 20,745 21,745 22,728 24,734 25,769 26,785 27,802 28,799 29,787 30,787 31,763 32,772 33,760 34,757 35,769 36,751 37,740 38,730 39,715 41,718 42,730 43,712 44,718 45,700 46,688 47,673 48,679 49,670 50,670 51,652 52,664 53,666 54,700 55,700 56,685 57,682 58,709 59,709 61,720 62,766 63,760 64,745 66,745 67,763 68,754 69,769 70,760 71,766 73,760 75,768 76,781 77,769 79,763 80,754 82,733 84,724 86,706 88,694 89,703 90,700 91,685 92,685 94,667',f,'#fff')
+path('0,784 2,781 5,808 7,811 8,799 11,772 12,757 14,739 16,730 18,733 20,730 22,735 24,735 26,748 28,778 29,787 30,793 32,783 34,768 36,763 38,748 40,730 42,724 44,720 46,709 48,690 49,682 51,670 53,665 55,676 57,690 60,700 61,706 62,724 64,742 66,754 68,751 70,758 73,763 77,769 80,767 82,751 85,732 88,709 90,702 93,691 94,682',f,'#ff0')
+path('0,805 2,797 9,796 11,793 12,784 13,772 14,763 17,748 19,734 24,733 27,748 29,763 32,772 34,778 36,775 38,763 41,742 44,732 47,712 50,694 52,682 54,676 57,678 59,688 61,694 63,714 65,724 67,739 70,754 73,758 76,766 80,766 84,754 86,739 90,715 92,703 94,694',f,'#f0f');
scale('ndbScale',[[f(709),'4000']]);
}

/* ---------- RSI ---------- */
{
const f=v=>v/3-281;
$('rsi').innerHTML=[892,928,976,1027,1060].map(v=>grid(f(v))).join('')
+path('0,910 1,904 2,905 3,993 4,1003 5,985 6,973 7,991 8,988 9,982 10,955 11,946 12,937 13,935 14,975 15,970 16,997 17,991 18,979 19,964 20,988 21,982 22,961 23,958 24,973 25,1009 26,1020 27,1030 28,1030 29,1033 30,1015 31,988 32,991 33,976 34,973 35,991 36,973 37,961 38,957 39,949 40,943 41,962 42,982 43,955 44,955 46,947 47,934 48,952 50,948 51,940 52,967 53,976 54,1025 55,1027 56,1000 57,997 58,1021 59,1027 60,1018 61,1024 62,1042 63,1018 64,1000 65,1002 66,991 67,1009 68,994 69,1009 70,991 71,1000 73,989 74,994 76,1015 77,1000 78,982 79,973 80,970 81,952 82,940 83,931 84,943 85,934 86,934 87,928 88,928 89,964 90,961 91,946 92,937 94,929',f,'#ff50b8');
scale('rsiScale',[[f(892),'100'],[f(928),'80'],[f(976),'50'],[f(1029),'20']]);
}

/* ---------- CCI ---------- */
{
const f=v=>v/3-357;
$('cci').innerHTML=[1171,1204,1240].map(v=>grid(f(v))).join('')
+path('0,1159 1,1159 2,1147 3,1204 4,1234 5,1222 6,1216 7,1226 8,1238 9,1225 10,1203 11,1184 12,1174 13,1171 14,1192 15,1192 16,1213 17,1213 18,1204 19,1186 20,1204 21,1216 22,1195 23,1177 24,1204 25,1258 26,1288 27,1288 28,1273 29,1258 30,1241 31,1228 34,1210 35,1216 36,1208 37,1189 39,1159 40,1153 41,1171 42,1186 43,1174 44,1162 45,1177 46,1168 47,1156 48,1162 49,1171 51,1171 52,1177 53,1192 54,1258 55,1273 56,1249 57,1237 58,1249 59,1258 60,1243 61,1243 62,1261 63,1255 64,1240 66,1228 67,1234 68,1229 69,1234 72,1231 73,1219 74,1225 75,1249 76,1264 77,1262 78,1228 79,1201 80,1198 81,1162 82,1126 83,1123 84,1153 85,1156 86,1165 88,1171 90,1189 91,1183 92,1168 93,1168 94,1159',f,'#eee');
scale('cciScale',[[f(1171),'100'],[f(1204),'0'],[f(1240),'-100']]);
}
$('dates').innerHTML=[['202105',73],['06',144],['08',280],['10',415],['12',535],['202201',597],['02',669],['04',774],['05',850],['07',969],['08',1044],['10',1180],['12',1284],['202301',1348],['03',1465]]
 .map(([t,x])=>`<text x="${x-69}" y="11" fill="#eee" style="font-size:11px">${t}</text>`).join('');

/* ---------- quote tables ---------- */
const lv=[['卖五',4319,241],['卖四',4318,359],['卖三',4317,423],['卖二',4316,440],['卖一',4315,356,'best cut'],['买一',4314,11,'best'],['买二',4313,87],['买三',4312,473],['买四',4311,745],['买五',4310,2922,'cut']];
const st=[['最新','4313','u','结算','4256','u'],['涨跌','62','u','昨结','4251','w'],['幅度','1.46%','u','开盘','4250','d'],['总手','2639304','y','最高','4322','u'],['现手','231','y','最低','4206','d'],['涨停','4718','u','跌停','3783','d'],['持仓','2107683','y','仓差','59546','y'],['外盘','1309627','u','内盘','1329677','d','cut']];
$('quote').insertAdjacentHTML('beforeend','<tbody>'+lv.map(r=>`<tr class="${r[3]||''}"><th>${r[0]}</th><td class="r u">${r[1]}</td><td class="y mid" colspan="2">${r[2]}</td></tr>`).join('')
+st.map(r=>`<tr class="${r[6]||''}"><th>${r[0]}</th><td class="r ${r[2]}">${r[1]}</td><th class="mid">${r[3]}</th><td class="r end ${r[5]}">${r[4]}</td></tr>`).join('')+'</tbody>');
const tk='14:59 4315 223 +30 空开 d;:24 4316 248 +123 多开 u;:25 4315 222 +27 空开 d;:25 4316 350 -148 空平 u;:29 4316 398 +157 多开 u;:30 4315 264 +150 空开 d;:32 4315 293 -118 空平 u;:33 4315 521 -255 空平 u;:34 4313 237 +31 空开 d;:34 4314 461 +36 多开 u;:40 4314 327 -33 空平 u;:42 4314 245 -92 空平 u;:42 4314 261 +114 多开 u;:45 4314 237 -37 多平 d;:49 4314 413 -54 空平 u;:50 4314 314 -4 空平 u;:51 4313 324 -45 多平 d;:51 4314 347 -83 空平 u;:52 4313 233 +103 空开 d;:53 4313 243 -82 空平 u;:55 4313 280 -237 多平 d;:55 4315 351 -9 空平 u;15:00 4313 231 -95 多平 d';
$('ticks').insertAdjacentHTML('beforeend','<thead><tr><th>北京</th><th class="text-end">价格</th><th class="text-end">√大单</th><th class="text-end">仓差</th><th class="text-end">性质</th></tr></thead><tbody>'
+tk.split(';').map(t=>{const r=t.split(' ');return `<tr><td class="r w ${r[0][0]===':'?'sec':''}">${r[0]}</td><td class="r u">${r[1]}</td><td class="r ${r[5]}">${r[2]}</td><td class="r y">${r[3]}</td><td class="r ${r[5]}">${r[4]}</td></tr>`}).join('')+'</tbody>');
</script>
</body>
</html>
